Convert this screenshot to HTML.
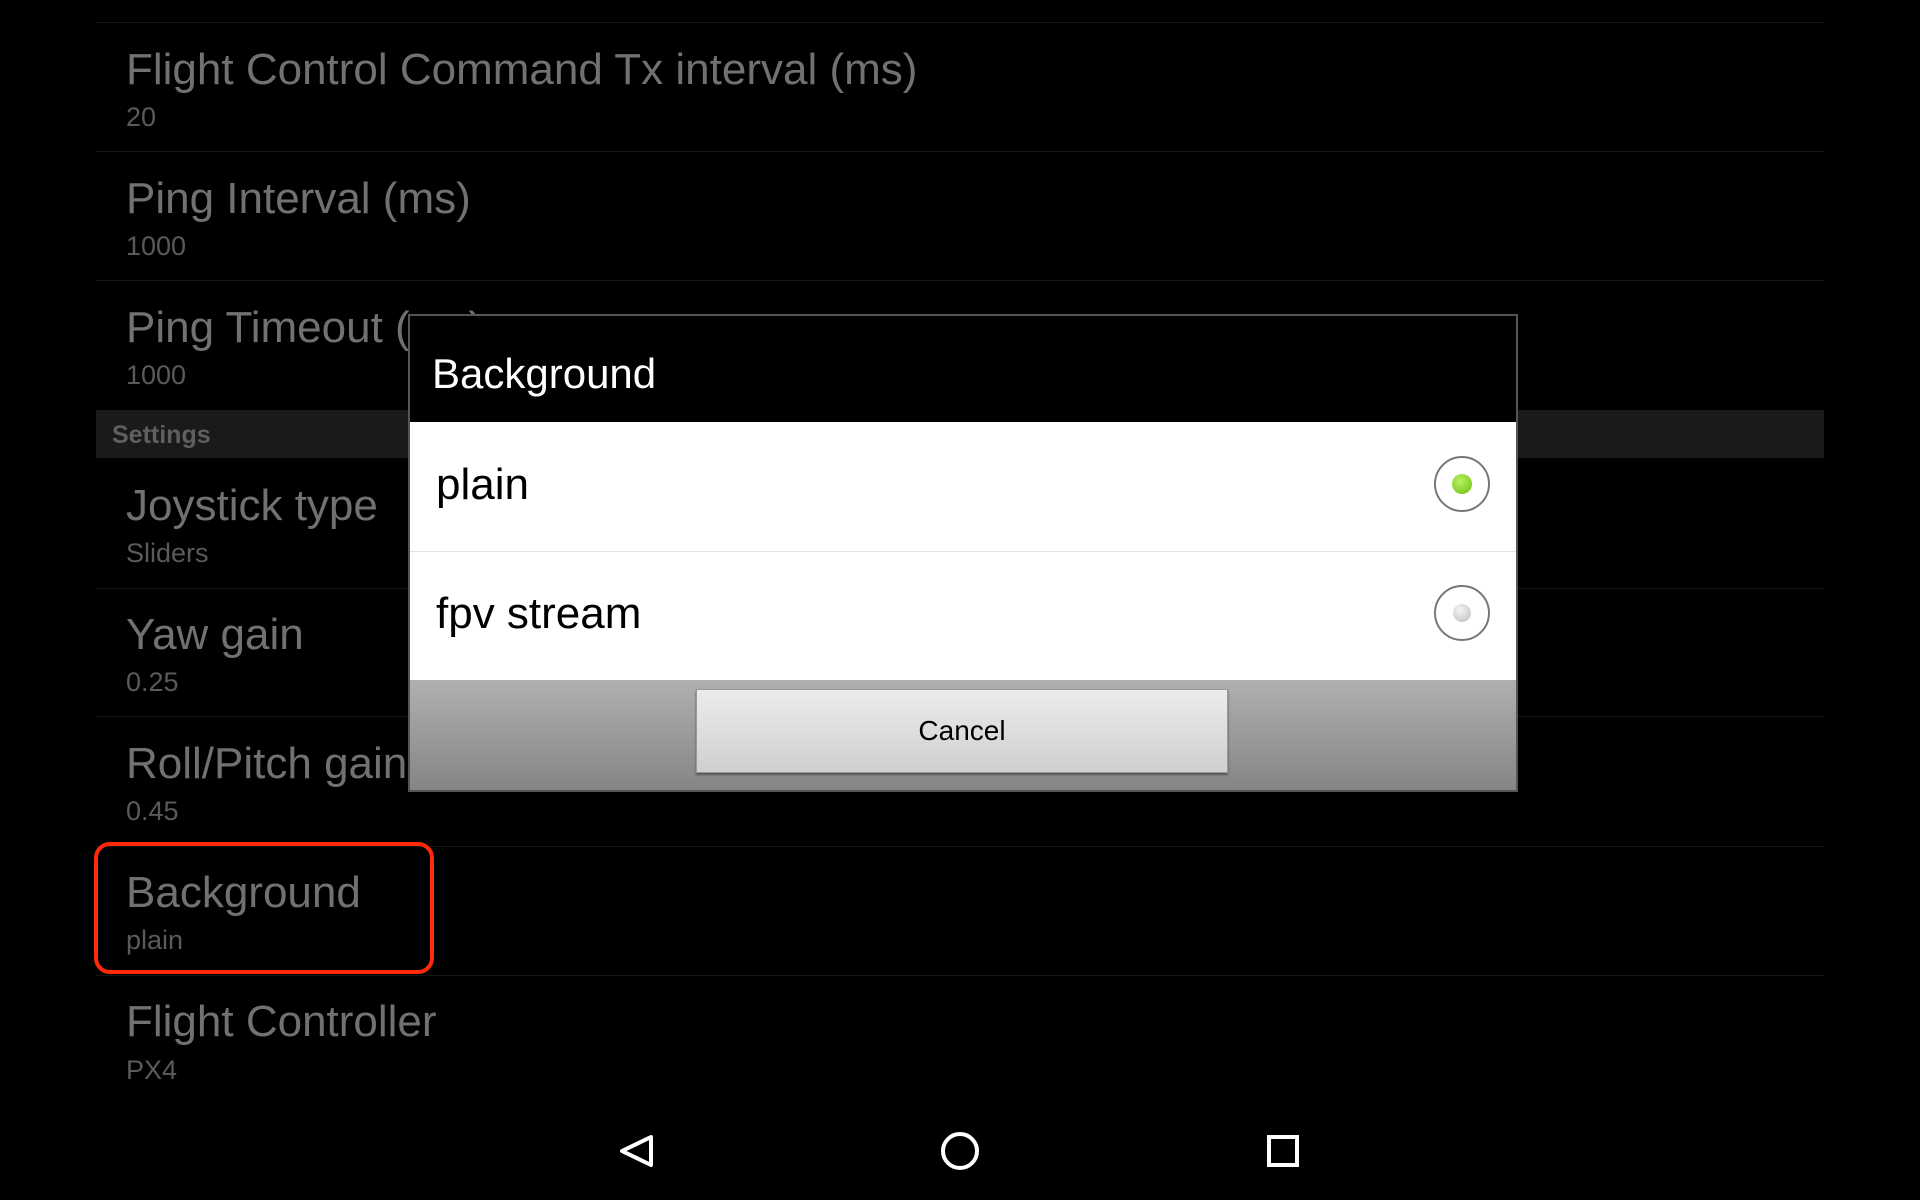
<!DOCTYPE html>
<html><head><style>
body{margin:0;width:1920px;height:1200px;background:#000;position:relative;overflow:hidden;font-family:"Liberation Sans",sans-serif}
.t{position:absolute;left:126px;font-size:44px;color:#717171;white-space:nowrap}
.s{position:absolute;left:126px;font-size:27px;color:#5a5a5a}
.sep{position:absolute;left:96px;width:1728px;height:1px;background:#161616}
</style></head><body>
<div class="sep" style="top:22px"></div>
<div class="t" style="top:45px">Flight Control Command Tx interval (ms)</div><div class="s" style="top:102px">20</div>
<div class="sep" style="top:151px"></div>
<div class="t" style="top:174px">Ping Interval (ms)</div><div class="s" style="top:231px">1000</div>
<div class="sep" style="top:280px"></div>
<div class="t" style="top:303px">Ping Timeout (ms)</div><div class="s" style="top:360px">1000</div>
<div style="position:absolute;left:96px;top:410px;width:1728px;height:48px;background:#1a1a1a"></div>
<div style="position:absolute;left:112px;top:421px;font-size:25px;font-weight:bold;color:#5f5f5f">Settings</div>
<div class="t" style="top:481px">Joystick type</div><div class="s" style="top:538px">Sliders</div>
<div class="sep" style="top:588px"></div>
<div class="t" style="top:610px">Yaw gain</div><div class="s" style="top:667px">0.25</div>
<div class="sep" style="top:716px"></div>
<div class="t" style="top:739px">Roll/Pitch gain</div><div class="s" style="top:796px">0.45</div>
<div class="sep" style="top:846px"></div>
<div class="t" style="top:868px">Background</div><div class="s" style="top:925px">plain</div>
<div class="sep" style="top:975px"></div>
<div class="t" style="top:997px">Flight Controller</div><div class="s" style="top:1055px">PX4</div>
<div style="position:absolute;left:94px;top:842px;width:332px;height:124px;border:4px solid #ff2a0a;border-radius:16px"></div>

<div style="position:absolute;left:408px;top:314px;width:1106px;height:474px;border:2px solid #555;background:#000">
 <div style="position:absolute;left:22px;top:34px;font-size:42px;color:#fff">Background</div>
 <div style="position:absolute;left:0;top:106px;width:1106px;height:129px;background:#fff;border-bottom:1px solid #e2e2e2"></div>
 <div style="position:absolute;left:26px;top:144px;font-size:44px;color:#000">plain</div>
 <div style="position:absolute;left:0;top:236px;width:1106px;height:128px;background:#fff"></div>
 <div style="position:absolute;left:26px;top:273px;font-size:44px;color:#000">fpv stream</div>
 <div style="position:absolute;left:1024px;top:140px;width:52px;height:52px;border:2px solid #777;border-radius:50%;background:#fff"><div style="margin:16px;width:20px;height:20px;border-radius:50%;background:radial-gradient(circle at 40% 35%,#b8f060,#6cc010)"></div></div>
 <div style="position:absolute;left:1024px;top:269px;width:52px;height:52px;border:2px solid #777;border-radius:50%;background:#fff"><div style="margin:17px;width:18px;height:18px;border-radius:50%;background:radial-gradient(circle at 40% 35%,#f4f4f4,#bbb)"></div></div>
 <div style="position:absolute;left:0;top:364px;width:1106px;height:110px;background:linear-gradient(#b0b0b0,#858585)"></div>
 <div style="position:absolute;left:286px;top:373px;width:530px;height:82px;background:linear-gradient(#ececec,#cfcfcf);border:1px solid #999;box-shadow:0 2px 2px #555;text-align:center;line-height:82px;font-size:28px;color:#000">Cancel</div>
</div>

<svg style="position:absolute;left:0;top:1100px" width="1920" height="100">
 <path d="M651 37 L622 51 L651 65 Z" fill="none" stroke="#fff" stroke-width="4" stroke-linejoin="round"/>
 <circle cx="960" cy="51" r="17" fill="none" stroke="#fff" stroke-width="4"/>
 <rect x="1269" y="37" width="28" height="28" fill="none" stroke="#fff" stroke-width="4"/>
</svg>
</body></html>
